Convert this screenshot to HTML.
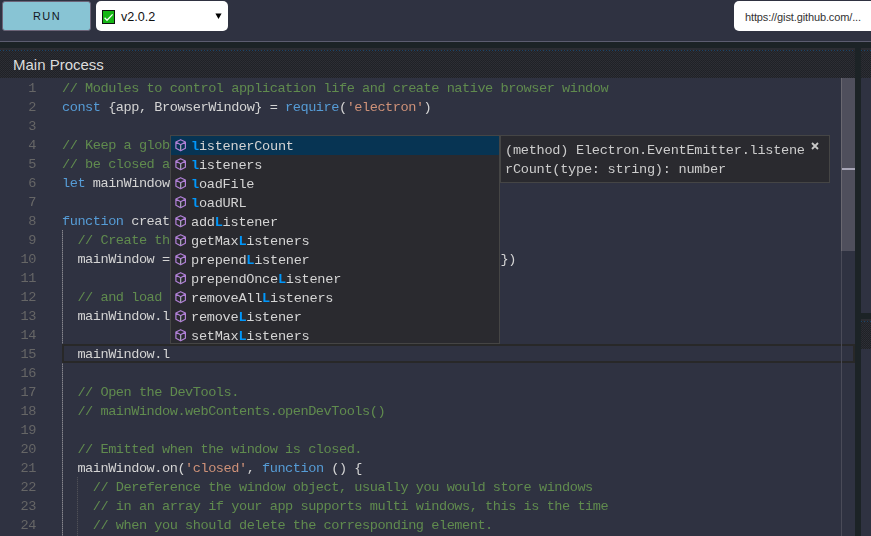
<!DOCTYPE html>
<html><head><meta charset="utf-8">
<style>
*{box-sizing:border-box;}
html,body{margin:0;padding:0;width:871px;height:536px;overflow:hidden;background:#1c2326;}
body{position:relative;font-family:"Liberation Sans",sans-serif;}
.abs{position:absolute;}
#top{left:0;top:0;width:871px;height:41px;background:#2f3241;}
#topline{left:0;top:41px;width:871px;height:1px;background:#5c5d70;}
#run{left:2px;top:1px;width:89px;height:30px;background:#88c4d4;border:1px solid #6c6478;border-radius:3px;
  color:#15171f;font-size:11px;letter-spacing:1.35px;text-align:center;line-height:29px;padding-left:1px;}
#sel{left:96px;top:1px;width:132px;height:30px;background:#fff;border-radius:5px;}
#chk{left:6px;top:9px;width:13px;height:14px;background:#16b716;border:1px solid #111;}
#ver{left:25px;top:1px;line-height:30px;font-size:12.6px;color:#111;}
#arrow{left:119px;top:12px;}
#url{left:734px;top:1px;width:150px;height:30px;background:#fff;border-radius:5px;}
#urltxt{left:11px;top:1px;line-height:30px;font-size:11px;color:#333;letter-spacing:-0.12px;}
.hdr{background-color:#2c2d33;background-image:linear-gradient(#2c2d33,#2c2d33),repeating-linear-gradient(90deg,#1a4468 0 1px,transparent 1px 3px),conic-gradient(#1f2126 0 25%,#2d2f36 0 50%,#202227 0 75%,#2b2c32 0);background-size:100% 2px,100% 1px,2px 2px;background-position:0 0,0 2px,0 0;background-repeat:no-repeat,no-repeat,repeat;}
.ed{background:#2f3241;}
#lhdr{left:0;top:48px;width:855px;height:30px;}
#lhdrtxt{left:13px;top:2px;line-height:30px;font-size:15px;color:#dcdcdc;}
#led{left:0;top:78px;width:855px;height:458px;overflow:hidden;will-change:transform;}
#rhdr1{left:861px;top:48px;width:10px;height:30px;}
#red1{left:861px;top:78px;width:10px;height:235px;}
#rhdr2{left:861px;top:319px;width:10px;height:30px;}
#red2{left:861px;top:349px;width:10px;height:187px;}
.ln{position:absolute;left:0;width:36px;text-align:right;height:19px;line-height:19px;color:#666666;}
.cl{position:absolute;left:62px;height:19px;line-height:19px;white-space:pre;color:#d4d4d4;}
.mono{font-family:"Liberation Mono",monospace;font-size:13.6px;letter-spacing:-0.465px;}
.c{color:#608b4e;} .n{color:#b5cea8;} .k{color:#569cd6;} .s{color:#ce9178;}
.guide{position:absolute;width:1px;background:#6a6b73;}
#cur{left:62px;top:266px;width:793px;height:19px;border:2px solid #282828;}
#scroll{left:842px;top:0;width:13px;height:173px;background:#4f4f5c;}
#mark{left:842px;top:90px;width:13px;height:2px;background:#a8a6b8;}
#ruler{left:841px;top:0;width:1px;height:458px;background:#4a4b58;}
#ruler2{left:841px;top:0;width:1px;height:173px;background:#6a6870;}
#sugg{left:170px;top:57px;width:330px;height:209px;background:#2a2a2f;border:1px solid #454545;overflow:hidden;}
.sr{position:absolute;left:0;width:328px;height:19px;line-height:19px;}
.sr.sel{background:#073453;}
.sr .t{position:absolute;left:20px;top:1px;letter-spacing:-0.26px;white-space:pre;color:#d4d4d4;}
.sr .h{color:#0097fb;font-weight:bold;}
.sr svg{position:absolute;left:0;top:0;}
#det{left:500px;top:57px;width:330px;height:48px;background:#2a2a2f;border:1px solid #454545;}
#det .t{position:absolute;left:4px;white-space:pre;color:#cccccc;line-height:19px;letter-spacing:-0.27px;}
#close{left:310px;top:6px;width:8px;height:8px;}
</style></head><body>
<div id="top" class="abs"></div>
<div id="topline" class="abs"></div>
<div id="run" class="abs">RUN</div>
<div id="sel" class="abs"><div id="chk" class="abs"><svg width="11" height="12" style="position:absolute;left:0;top:0"><path d="M1.6 6.8 L4 9.2 L9.6 3.4" fill="none" stroke="#f4fff4" stroke-width="1.3"/></svg></div><div id="ver" class="abs">v2.0.2</div><svg id="arrow" class="abs" width="10" height="10"><path d="M0.4 0.4 H6.6 L3.5 6 Z" fill="#000"/></svg></div>
<div id="url" class="abs"><div id="urltxt" class="abs">https://gist.github.com/...</div></div>

<div id="lhdr" class="abs hdr"><div id="lhdrtxt" class="abs">Main Process</div></div>
<div id="rhdr1" class="abs hdr"></div>
<div id="red1" class="abs ed"></div>
<div id="rhdr2" class="abs hdr"></div>
<div id="red2" class="abs ed"></div>

<div id="led" class="abs ed mono">
<div class="ln" style="top:1px">1</div>
<div class="ln" style="top:20px">2</div>
<div class="ln" style="top:39px">3</div>
<div class="ln" style="top:58px">4</div>
<div class="ln" style="top:77px">5</div>
<div class="ln" style="top:96px">6</div>
<div class="ln" style="top:115px">7</div>
<div class="ln" style="top:134px">8</div>
<div class="ln" style="top:153px">9</div>
<div class="ln" style="top:172px">10</div>
<div class="ln" style="top:191px">11</div>
<div class="ln" style="top:210px">12</div>
<div class="ln" style="top:229px">13</div>
<div class="ln" style="top:248px">14</div>
<div class="ln" style="top:267px">15</div>
<div class="ln" style="top:286px">16</div>
<div class="ln" style="top:305px">17</div>
<div class="ln" style="top:324px">18</div>
<div class="ln" style="top:343px">19</div>
<div class="ln" style="top:362px">20</div>
<div class="ln" style="top:381px">21</div>
<div class="ln" style="top:400px">22</div>
<div class="ln" style="top:419px">23</div>
<div class="ln" style="top:438px">24</div>
<div class="ln" style="top:457px">25</div>
<div class="guide" style="left:62px;top:152px;height:306px;background:repeating-linear-gradient(#84848c 0 1px,#5c5d66 1px 2px)"></div>
<div class="guide" style="left:77px;top:399px;height:59px;background:repeating-linear-gradient(#4e4f58 0 1px,#383a44 1px 2px)"></div>
<div id="cur" class="abs"></div>
<div class="cl" style="top:1px"><span class="c">// Modules to control application life and create native browser window</span></div>
<div class="cl" style="top:20px"><span class="k">const</span> {app, BrowserWindow} = <span class="k">require</span>(<span class="s">&#x27;electron&#x27;</span>)</div>
<div class="cl" style="top:39px"></div>
<div class="cl" style="top:58px"><span class="c">// Keep a global reference of the window object, if you don&#x27;t, the window will</span></div>
<div class="cl" style="top:77px"><span class="c">// be closed automatically when the JavaScript object is garbage collected.</span></div>
<div class="cl" style="top:96px"><span class="k">let</span> mainWindow</div>
<div class="cl" style="top:115px"></div>
<div class="cl" style="top:134px"><span class="k">function</span> createWindow () {</div>
<div class="cl" style="top:153px">  <span class="c">// Create the browser window.</span></div>
<div class="cl" style="top:172px">  mainWindow = <span class="k">new</span> BrowserWindow({width: <span class="n">800</span>, height: <span class="n">600</span>})</div>
<div class="cl" style="top:191px"></div>
<div class="cl" style="top:210px">  <span class="c">// and load the index.html of the app.</span></div>
<div class="cl" style="top:229px">  mainWindow.loadFile(<span class="s">&#x27;index.html&#x27;</span>)</div>
<div class="cl" style="top:248px"></div>
<div class="cl" style="top:267px">  mainWindow.l</div>
<div class="cl" style="top:286px"></div>
<div class="cl" style="top:305px">  <span class="c">// Open the DevTools.</span></div>
<div class="cl" style="top:324px">  <span class="c">// mainWindow.webContents.openDevTools()</span></div>
<div class="cl" style="top:343px"></div>
<div class="cl" style="top:362px">  <span class="c">// Emitted when the window is closed.</span></div>
<div class="cl" style="top:381px">  mainWindow.on(<span class="s">&#x27;closed&#x27;</span>, <span class="k">function</span> () {</div>
<div class="cl" style="top:400px">    <span class="c">// Dereference the window object, usually you would store windows</span></div>
<div class="cl" style="top:419px">    <span class="c">// in an array if your app supports multi windows, this is the time</span></div>
<div class="cl" style="top:438px">    <span class="c">// when you should delete the corresponding element.</span></div>
<div class="cl" style="top:457px">    mainWindow = <span class="k">null</span></div>
<div id="ruler" class="abs"></div>
<div id="scroll" class="abs"></div>
<div id="ruler2" class="abs"></div>
<div id="mark" class="abs"></div>
<div id="sugg" class="abs">
<div class="sr sel" style="top:0px"><svg width="20" height="19" viewBox="0 0 20 19"><path d="M9.65 8.7 V14.8" stroke="#a4a4b4" stroke-width="1.3" fill="none"/><path d="M9.65 3.7 L14.4 6 V12.3 L9.65 14.8 L4.9 12.3 V6 Z M4.9 6 L9.65 8.7 L14.4 6" fill="none" stroke="#b180d7" stroke-width="1.2" stroke-linejoin="round"/></svg><div class="t"><span class="h">l</span>istenerCount</div></div>
<div class="sr" style="top:19px"><svg width="20" height="19" viewBox="0 0 20 19"><path d="M9.65 8.7 V14.8" stroke="#a4a4b4" stroke-width="1.3" fill="none"/><path d="M9.65 3.7 L14.4 6 V12.3 L9.65 14.8 L4.9 12.3 V6 Z M4.9 6 L9.65 8.7 L14.4 6" fill="none" stroke="#b180d7" stroke-width="1.2" stroke-linejoin="round"/></svg><div class="t"><span class="h">l</span>isteners</div></div>
<div class="sr" style="top:38px"><svg width="20" height="19" viewBox="0 0 20 19"><path d="M9.65 8.7 V14.8" stroke="#a4a4b4" stroke-width="1.3" fill="none"/><path d="M9.65 3.7 L14.4 6 V12.3 L9.65 14.8 L4.9 12.3 V6 Z M4.9 6 L9.65 8.7 L14.4 6" fill="none" stroke="#b180d7" stroke-width="1.2" stroke-linejoin="round"/></svg><div class="t"><span class="h">l</span>oadFile</div></div>
<div class="sr" style="top:57px"><svg width="20" height="19" viewBox="0 0 20 19"><path d="M9.65 8.7 V14.8" stroke="#a4a4b4" stroke-width="1.3" fill="none"/><path d="M9.65 3.7 L14.4 6 V12.3 L9.65 14.8 L4.9 12.3 V6 Z M4.9 6 L9.65 8.7 L14.4 6" fill="none" stroke="#b180d7" stroke-width="1.2" stroke-linejoin="round"/></svg><div class="t"><span class="h">l</span>oadURL</div></div>
<div class="sr" style="top:76px"><svg width="20" height="19" viewBox="0 0 20 19"><path d="M9.65 8.7 V14.8" stroke="#a4a4b4" stroke-width="1.3" fill="none"/><path d="M9.65 3.7 L14.4 6 V12.3 L9.65 14.8 L4.9 12.3 V6 Z M4.9 6 L9.65 8.7 L14.4 6" fill="none" stroke="#b180d7" stroke-width="1.2" stroke-linejoin="round"/></svg><div class="t">add<span class="h">L</span>istener</div></div>
<div class="sr" style="top:95px"><svg width="20" height="19" viewBox="0 0 20 19"><path d="M9.65 8.7 V14.8" stroke="#a4a4b4" stroke-width="1.3" fill="none"/><path d="M9.65 3.7 L14.4 6 V12.3 L9.65 14.8 L4.9 12.3 V6 Z M4.9 6 L9.65 8.7 L14.4 6" fill="none" stroke="#b180d7" stroke-width="1.2" stroke-linejoin="round"/></svg><div class="t">getMax<span class="h">L</span>isteners</div></div>
<div class="sr" style="top:114px"><svg width="20" height="19" viewBox="0 0 20 19"><path d="M9.65 8.7 V14.8" stroke="#a4a4b4" stroke-width="1.3" fill="none"/><path d="M9.65 3.7 L14.4 6 V12.3 L9.65 14.8 L4.9 12.3 V6 Z M4.9 6 L9.65 8.7 L14.4 6" fill="none" stroke="#b180d7" stroke-width="1.2" stroke-linejoin="round"/></svg><div class="t">prepend<span class="h">L</span>istener</div></div>
<div class="sr" style="top:133px"><svg width="20" height="19" viewBox="0 0 20 19"><path d="M9.65 8.7 V14.8" stroke="#a4a4b4" stroke-width="1.3" fill="none"/><path d="M9.65 3.7 L14.4 6 V12.3 L9.65 14.8 L4.9 12.3 V6 Z M4.9 6 L9.65 8.7 L14.4 6" fill="none" stroke="#b180d7" stroke-width="1.2" stroke-linejoin="round"/></svg><div class="t">prependOnce<span class="h">L</span>istener</div></div>
<div class="sr" style="top:152px"><svg width="20" height="19" viewBox="0 0 20 19"><path d="M9.65 8.7 V14.8" stroke="#a4a4b4" stroke-width="1.3" fill="none"/><path d="M9.65 3.7 L14.4 6 V12.3 L9.65 14.8 L4.9 12.3 V6 Z M4.9 6 L9.65 8.7 L14.4 6" fill="none" stroke="#b180d7" stroke-width="1.2" stroke-linejoin="round"/></svg><div class="t">removeAll<span class="h">L</span>isteners</div></div>
<div class="sr" style="top:171px"><svg width="20" height="19" viewBox="0 0 20 19"><path d="M9.65 8.7 V14.8" stroke="#a4a4b4" stroke-width="1.3" fill="none"/><path d="M9.65 3.7 L14.4 6 V12.3 L9.65 14.8 L4.9 12.3 V6 Z M4.9 6 L9.65 8.7 L14.4 6" fill="none" stroke="#b180d7" stroke-width="1.2" stroke-linejoin="round"/></svg><div class="t">remove<span class="h">L</span>istener</div></div>
<div class="sr" style="top:190px"><svg width="20" height="19" viewBox="0 0 20 19"><path d="M9.65 8.7 V14.8" stroke="#a4a4b4" stroke-width="1.3" fill="none"/><path d="M9.65 3.7 L14.4 6 V12.3 L9.65 14.8 L4.9 12.3 V6 Z M4.9 6 L9.65 8.7 L14.4 6" fill="none" stroke="#b180d7" stroke-width="1.2" stroke-linejoin="round"/></svg><div class="t">setMax<span class="h">L</span>isteners</div></div>
</div>
<div id="det" class="abs"><div class="t" style="top:5px">(method) Electron.EventEmitter.listene</div><div class="t" style="top:24px">rCount(type: string): number</div><svg id="close" class="abs" width="8" height="8"><path d="M1 1 L7 7 M7 1 L1 7" stroke="#c8c8c8" stroke-width="1.8"/></svg></div>
</div>
</body></html>
